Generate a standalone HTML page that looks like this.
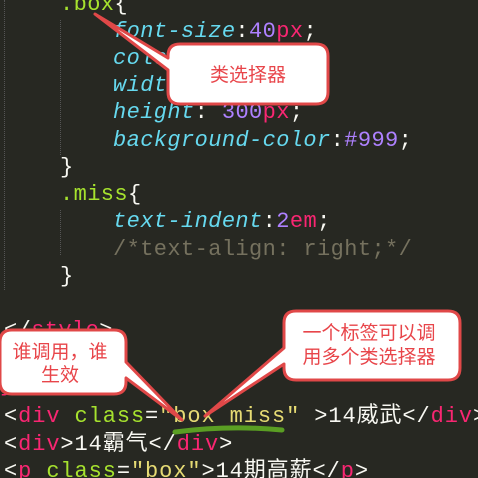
<!DOCTYPE html>
<html><head><meta charset="utf-8"><style>
html,body{margin:0;padding:0;background:#272822;width:478px;height:478px;overflow:hidden;position:relative}
.l{position:absolute;left:0;white-space:pre;font-family:"Liberation Mono","Noto Sans CJK SC",monospace;font-size:22px;line-height:27px;color:#f8f8f2;letter-spacing:0.4px}
.h{letter-spacing:0.9px}
.g{color:#a6e22e}.c{color:#66d9ef;font-style:italic}.n{color:#ae81ff}.p{color:#f92672}.y{color:#e6db74}.m{color:#75715e}
.cj{font-family:"Noto Sans CJK SC",sans-serif;font-size:22px}
.guide{position:absolute;border-left:1px dotted #555}
svg{position:absolute;left:0;top:0}
.t{font-family:"Noto Sans CJK SC",sans-serif;font-size:19px;fill:#e8454a}
</style></head><body>
<div class="guide" style="left:4px;top:0;height:290px"></div>
<div class="guide" style="left:60px;top:20px;height:135px"></div>
<div class="guide" style="left:60px;top:210px;height:45px"></div>
<div class="l" style="top:-9px;left:60px"><span class="g">.box</span>{</div>
<div class="l" style="top:18px;left:113px"><span class="c">font-size</span>:<span class="n">40</span><span class="p">px</span>;</div>
<div class="l" style="top:45px;left:113px"><span class="c">color</span>:</div>
<div class="l" style="top:72px;left:113px"><span class="c">width</span>:</div>
<div class="l" style="top:99px;left:113px"><span class="c">height</span>: <span class="n">300</span><span class="p">px</span>;</div>
<div class="l" style="top:127px;left:113px"><span class="c">background-color</span>:<span class="n">#999</span>;</div>
<div class="l" style="top:154px;left:60px">}</div>
<div class="l" style="top:181px;left:60px"><span class="g">.miss</span>{</div>
<div class="l" style="top:208px;left:113px"><span class="c">text-indent</span>:<span class="n">2</span><span class="p">em</span>;</div>
<div class="l" style="top:236px;left:113px"><span class="m">/*text-align: right;*/</span></div>
<div class="l" style="top:263px;left:60px">}</div>
<div class="l" style="top:317px;left:4px">&lt;/<span class="p">style</span>&gt;</div>
<div class="l" style="top:372px;left:0px"><span class="p">}</span></div>
<div class="l h" style="top:400px;left:4px">&lt;<span class="p">div</span> <span class="g">class</span>=<span class="y">"box miss"</span> &gt;14<span class="cj">威武</span>&lt;/<span class="p">div</span>&gt;</div>
<div class="l h" style="top:428px;left:4px">&lt;<span class="p">div</span>&gt;14<span class="cj">霸气</span>&lt;/<span class="p">div</span>&gt;</div>
<div class="l h" style="top:455px;left:4px">&lt;<span class="p">p</span> <span class="g">class</span>=<span class="y">"box"</span>&gt;14<span class="cj">期高薪</span>&lt;/<span class="p">p</span>&gt;</div>
<svg width="478" height="478">
<path d="M175,432 Q230,425 282,430" stroke="#5a9e23" stroke-width="5" fill="none" stroke-linecap="round"/>
<g fill="#fff" stroke="#e04848" stroke-width="3" stroke-linejoin="round">
<path d="M180,44 H316 Q328,44 328,56 V92 Q328,104 316,104 H180 Q168,104 168,92 V70 L95,14 L168,58 V56 Q168,44 180,44 Z"/>
<path d="M12,330 H114 Q126,330 126,342 V362 L182,420 L126,378 V382 Q126,394 114,394 H12 Q0,394 0,382 V342 Q0,330 12,330 Z"/>
<path d="M296,311 H448 Q460,311 460,323 V368 Q460,380 448,380 H296 Q284,380 284,368 V364 L205,416 L284,348 V323 Q284,311 296,311 Z"/>
</g>
<text class="t" x="248" y="81" text-anchor="middle">类选择器</text>
<text class="t" x="60" y="358" text-anchor="middle">谁调用，谁</text>
<text class="t" x="60" y="381" text-anchor="middle">生效</text>
<text class="t" x="369" y="339" text-anchor="middle">一个标签可以调</text>
<text class="t" x="369" y="363" text-anchor="middle">用多个类选择器</text>
</svg>
</body></html>
